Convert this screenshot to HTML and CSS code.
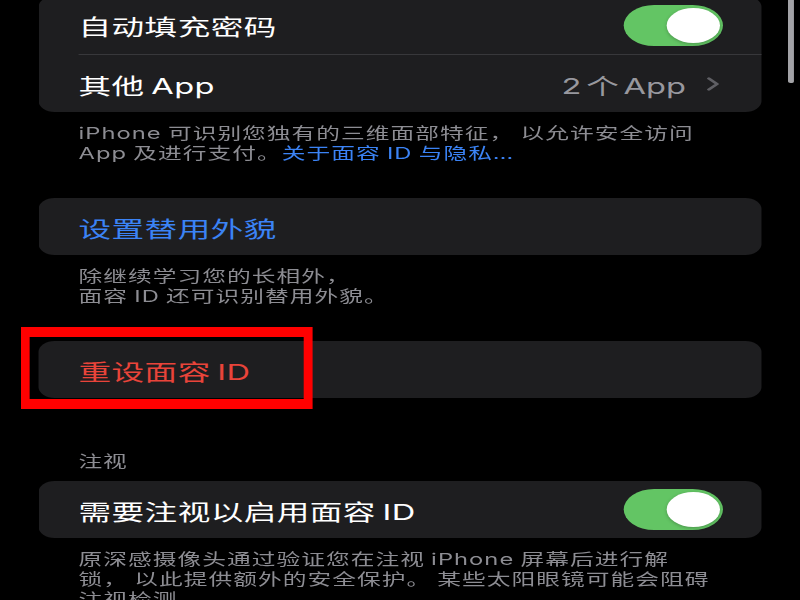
FILE: index.html
```html
<!DOCTYPE html>
<html lang="zh-CN">
<head>
    <meta charset="UTF-8">
    <meta name="viewport" content="width=device-width, initial-scale=1.0">
    <title>面容 ID 与密码</title>
    <link rel="stylesheet" href="styles.css">
</head>
<body>
    <div class="screen">
        <span class="scrollbar"></span>

        <div class="group first">
            <div class="row">
                <span class="label">自动填充密码</span>
                <span class="switch"><span class="knob"></span></span>
            </div>
            <div class="divider"></div>
            <div class="row">
                <span class="label">其他 App</span>
                <span class="value">2 个 App</span>
                <svg class="chevron" width="9" height="14" viewBox="0 0 9 14">
                    <polyline points="1.5,1.5 7,7 1.5,12.5" fill="none" stroke="#5f5f64" stroke-width="2.4" stroke-linecap="round" stroke-linejoin="round"/>
                </svg>
            </div>
        </div>
        <p class="footer">
            iPhone 可识别您独有的三维面部特征， 以允许安全访问<br>
            App 及进行支付。<a class="link" href="#">关于面容 ID 与隐私…</a>
        </p>

        <div class="group">
            <div class="row">
                <span class="label action">设置替用外貌</span>
            </div>
        </div>
        <p class="footer">
            除继续学习您的长相外，<br>
            面容 ID 还可识别替用外貌。
        </p>

        <div class="group marked">
            <div class="row">
                <span class="label danger">重设面容 ID</span>
            </div>
            <span class="highlight"></span>
        </div>

        <h3 class="header">注视</h3>
        <div class="group">
            <div class="row">
                <span class="label">需要注视以启用面容 ID</span>
                <span class="switch"><span class="knob"></span></span>
            </div>
        </div>
        <p class="footer">
            原深感摄像头通过验证您在注视 iPhone 屏幕后进行解<br>
            锁， 以此提供额外的安全保护。 某些太阳眼镜可能会阻碍<br>
            注视检测。
        </p>
    </div>
</body>
</html>
```

FILE: styles.css
```css
html, body {
    margin: 0;
    height: 100%;
    overflow: hidden;
    background-color: #000000;
}

body {
    font-family: "Inter", "Noto Sans CJK SC", sans-serif;
    color: #FFFFFF;
}

/* the capture is stretched sideways, so the phone screen is laid out
   at its own width and widened as a whole */
.screen {
    position: relative;
    width: 540px;
    transform: scaleX(1.4815);
    transform-origin: 0 0;
}

.scrollbar {
    position: absolute;
    top: -20px;
    right: 4px;
    width: 4px;
    height: 107px;
    border-radius: 2px;
    background-color: #a3a3a7;
}

.group {
    position: relative;
    margin: 0 26px;
    border-radius: 11px;
    background-color: #1e1e20;
}

.group.first {
    margin-top: -4px;
}

.row {
    display: flex;
    align-items: center;
    height: 57px;
    padding: 0 26px 0 27px;
}

.group.first .row:first-child {
    height: 58px;
}

.divider {
    height: 1px;
    margin-left: 27px;
    background-color: #38383b;
}

.label {
    flex: 1;
    font-size: 22px;
    letter-spacing: 0.3px;
    word-spacing: -2px;
    white-space: nowrap;
}

.label.action {
    color: #3b83f5;
}

.label.danger {
    color: #e9443a;
}

.value {
    font-size: 22px;
    word-spacing: -3px;
    color: #98989e;
    margin-right: 14px;
    white-space: nowrap;
}

.chevron {
    display: block;
    margin-right: 2px;
}

.switch {
    display: flex;
    align-items: center;
    justify-content: flex-end;
    width: 67px;
    height: 41px;
    padding: 0 2px;
    box-sizing: border-box;
    border-radius: 21px;
    background-color: #63c564;
}

.knob {
    width: 36px;
    height: 35px;
    border-radius: 50%;
    background-color: #FFFFFF;
    box-shadow: 0 1px 3px rgba(0, 0, 0, 0.25);
}

.footer {
    margin: 12px 0 35px;
    padding: 0 40px 0 53px;
    font-size: 16px;
    line-height: 20px;
    letter-spacing: 0.7px;
    word-spacing: -1px;
    color: #8d8d93;
    white-space: nowrap;
}

.footer .link {
    color: #3b83f5;
    text-decoration: none;
}

.group + .footer {
    margin-top: 11px;
}

.group.marked {
    margin-top: 33px;
}

.highlight {
    position: absolute;
    top: -14px;
    left: -12px;
    width: 197px;
    height: 82px;
    box-sizing: border-box;
    border-style: solid;
    border-color: #ff0000;
    border-width: 10px 6.75px;
}

.header {
    margin: 53px 0 10px;
    padding-left: 53px;
    font-size: 16px;
    font-weight: normal;
    line-height: 20px;
    letter-spacing: 0.6px;
    color: #8d8d93;
}
```
